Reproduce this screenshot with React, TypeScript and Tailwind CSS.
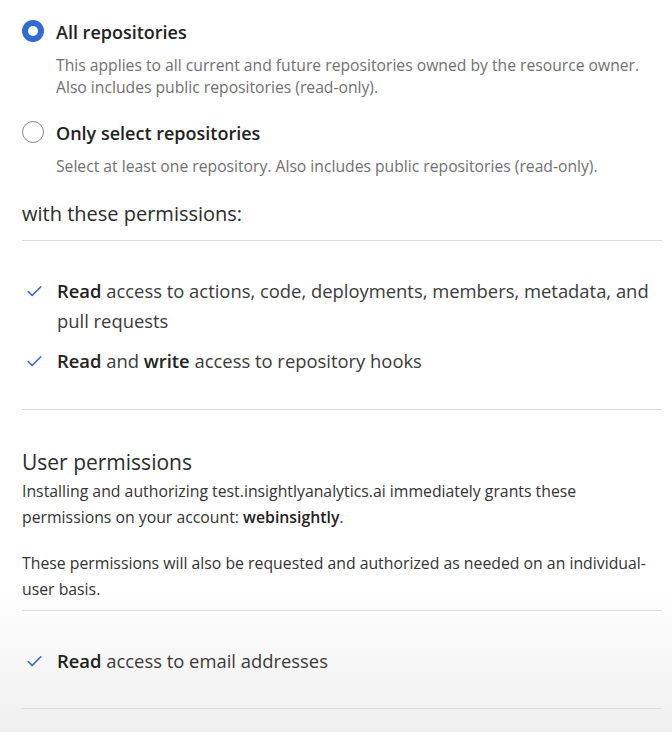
import { Check } from 'lucide-react';

function Radio({ checked }: { checked: boolean }) {
  return checked ? (
    <span className="mt-[1px] flex h-[22px] w-[22px] shrink-0 items-center justify-center rounded-full bg-[#2f6bd3]">
      <span className="h-[10px] w-[10px] rounded-full bg-white" />
    </span>
  ) : (
    <span className="mt-[1px] h-[22px] w-[22px] shrink-0 rounded-full border-[1.5px] border-[#8a8a8a] bg-white" />
  );
}

function Perm({ children }: { children: React.ReactNode }) {
  return (
    <li className="flex items-start gap-[13px]">
      <Check className="mt-[6px] h-[19px] w-[19px] shrink-0 text-[#3566c0]" strokeWidth={2} />
      <p className="text-[18.4px] leading-[30px] text-[#3a3a3a]">{children}</p>
    </li>
  );
}

export default function App() {
  return (
    <div
      className="min-h-[732px] w-[672px] bg-gradient-to-b from-white from-[80%] to-[#efefef] pl-[22px] pr-[8px] pt-[19px] text-[#2b2b2b]"
      style={{ fontFamily: '"Open Sans", "Noto Sans", sans-serif' }}
    >
      <div className="flex gap-[12px]">
        <Radio checked />
        <div>
          <p className="text-[18px] font-semibold leading-[26px] text-[#222]">All repositories</p>
          <p className="mt-[9px] text-[15.7px] leading-[22px] text-[#707070]">
            This applies to all current and future repositories owned by the resource owner.
            <br />
            Also includes public repositories (read-only).
          </p>
        </div>
      </div>

      <div className="mt-[22px] flex gap-[12px]">
        <Radio checked={false} />
        <div>
          <p className="text-[18px] font-semibold leading-[26px] text-[#222]">Only select repositories</p>
          <p className="mt-[9px] text-[15.7px] leading-[22px] text-[#707070]">
            Select at least one repository. Also includes public repositories (read-only).
          </p>
        </div>
      </div>

      <h2 className="mt-[22px] text-[20px] leading-[30px] text-[#2b2b2b]">with these permissions:</h2>
      <div className="mr-[2px] mt-[11px] h-px bg-[#dcdcdc]" />

      <ul className="mt-[35px] flex flex-col gap-[10px] pl-[3px]">
        <Perm>
          <b className="font-semibold text-[#222]">Read</b> access to actions, code, deployments, members, metadata, and
          pull requests
        </Perm>
        <Perm>
          <b className="font-semibold text-[#222]">Read</b> and <b className="font-semibold text-[#222]">write</b> access to repository hooks
        </Perm>
      </ul>
      <div className="mr-[2px] mt-[33px] h-px bg-[#dcdcdc]" />

      <h2 className="mt-[37px] text-[21px] leading-[30px] text-[#2b2b2b]">User permissions</h2>
      <p className="mt-[1px] text-[15.8px] leading-[26px] text-[#333]">
        Installing and authorizing test.insightlyanalytics.ai immediately grants these
        <br />
        permissions on your account: <b className="font-semibold text-[#222]">webinsightly</b>.
      </p>
      <p className="mt-[20px] text-[15.8px] leading-[26px] text-[#333]">
        These permissions will also be requested and authorized as needed on an individual-
        <br />
        user basis.
      </p>
      <div className="mr-[2px] mt-[8px] h-px bg-[#dcdcdc]" />

      <ul className="mt-[35px] pl-[3px]">
        <Perm>
          <b className="font-semibold text-[#222]">Read</b> access to email addresses
        </Perm>
      </ul>
      <div className="mr-[2px] mt-[32px] h-px bg-[#dcdcdc]" />
    </div>
  );
}
